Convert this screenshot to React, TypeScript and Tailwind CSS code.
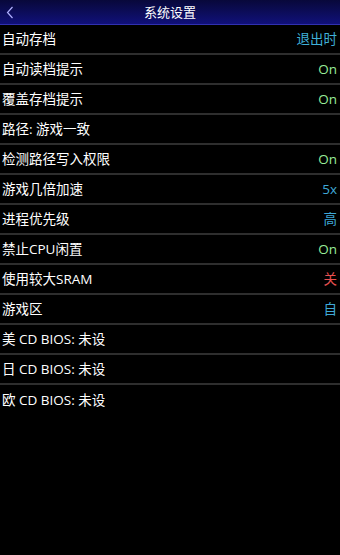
import React from "react";

type Row = { label: string; value?: string; color?: string };

const rows: Row[] = [
  { label: "自动存档", value: "退出时", color: "text-[#3fb0d8]" },
  { label: "自动读档提示", value: "On", color: "text-[#98ec98]" },
  { label: "覆盖存档提示", value: "On", color: "text-[#98ec98]" },
  { label: "路径: 游戏一致" },
  { label: "检测路径写入权限", value: "On", color: "text-[#98ec98]" },
  { label: "游戏几倍加速", value: "5x", color: "text-[#3fa8d8]" },
  { label: "进程优先级", value: "高", color: "text-[#3fa8d8]" },
  { label: "禁止CPU闲置", value: "On", color: "text-[#98ec98]" },
  { label: "使用较大SRAM", value: "关", color: "text-[#e85050]" },
  { label: "游戏区", value: "自", color: "text-[#3fa8d8]" },
  { label: "美 CD BIOS: 未设" },
  { label: "日 CD BIOS: 未设" },
  { label: "欧 CD BIOS: 未设" },
];

export default function App() {
  return (
    <div
      className="w-[340px] h-[555px] bg-black text-white overflow-hidden"
      style={{ fontFamily: '"Open Sans", "Noto Sans CJK SC", sans-serif' }}
    >
      <div className="relative h-[25px] flex items-center justify-center bg-gradient-to-b from-[#08083a] to-[#10107a] border-b border-[#3030b0]">
        <svg
          className="absolute left-[6px] top-[6px]"
          width="8"
          height="13"
          viewBox="0 0 8 13"
        >
          <path d="M6.5 1 L1.5 6.5 L6.5 12" fill="none" stroke="#b0b0ff" strokeWidth="1.2" />
        </svg>
        <span className="text-[13px] leading-none text-white">系统设置</span>
      </div>
      <div className="flex flex-col">
        {rows.map((r, i) => (
          <div
            key={i}
            className={`h-[30px] flex items-center justify-between pl-[2px] pr-[3px] pt-[1px] ${
              i < rows.length - 1 ? "border-b-2 border-[#2e2e2e]" : ""
            }`}
          >
            <span className="text-[13.5px] leading-none text-white">{r.label}</span>
            {r.value && (
              <span className={`text-[13.5px] leading-none ${r.color}`}>{r.value}</span>
            )}
          </div>
        ))}
      </div>
    </div>
  );
}
